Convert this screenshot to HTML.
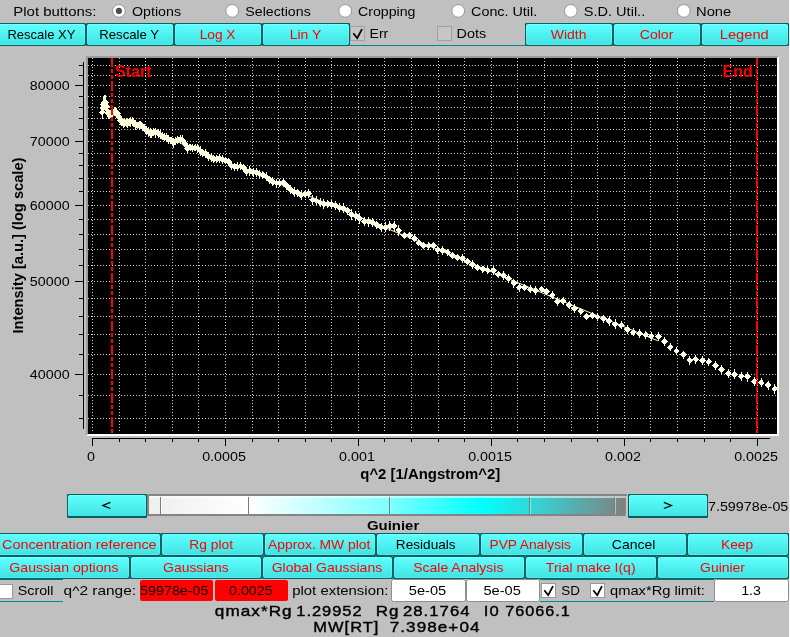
<!DOCTYPE html>
<html><head><meta charset="utf-8"><title>Guinier</title>
<style>
html,body{margin:0;padding:0;background:#c0c0c0;}
body{width:790px;height:637px;overflow:hidden;font-family:"Liberation Sans",sans-serif;}
svg{display:block;will-change:transform;}
text{font-family:"Liberation Sans",sans-serif;}
.t{font-size:13.3px;fill:#000;}
.r{fill:#ff0000;}
.tk{font-size:13.2px;fill:#000;}
.b{font-weight:bold;}
</style></head><body>
<svg width="790" height="637" viewBox="0 0 790 637">
<defs>
<linearGradient id="bg" x1="0" y1="0" x2="0" y2="1"><stop offset="0" stop-color="#60ffff"/><stop offset="1" stop-color="#3fe2e2"/></linearGradient>
<linearGradient id="wh" x1="0" y1="0" x2="1" y2="0"><stop offset="0" stop-color="#eeeeee"/><stop offset="0.21" stop-color="#ffffff"/><stop offset="0.50" stop-color="#80ffff"/><stop offset="0.70" stop-color="#00ffff"/><stop offset="0.80" stop-color="#30d8d8"/><stop offset="1" stop-color="#808080"/></linearGradient>
<clipPath id="cp"><rect x="88" y="58" width="689" height="376"/></clipPath>
<clipPath id="ci"><rect x="141" y="581" width="71" height="20"/></clipPath>
</defs>
<rect x="0" y="0" width="790" height="637" fill="#c0c0c0"/>

<text x="13.27" y="16.0" class="t" textLength="83.19" lengthAdjust="spacingAndGlyphs">Plot buttons:</text>
<circle cx="118.9" cy="10.9" r="6.35" fill="#ffffff" stroke="#8e8e8e" stroke-width="0.9"/>
<circle cx="118.9" cy="10.9" r="2.8" fill="#505050" stroke="#303030" stroke-width="0.6"/>
<text x="132.03" y="16.0" class="t" textLength="48.99" lengthAdjust="spacingAndGlyphs">Options</text>
<circle cx="232.2" cy="10.9" r="6.35" fill="#ffffff" stroke="#8e8e8e" stroke-width="0.9"/>
<text x="245.36" y="16.0" class="t" textLength="65.36" lengthAdjust="spacingAndGlyphs">Selections</text>
<circle cx="345.2" cy="10.9" r="6.35" fill="#ffffff" stroke="#8e8e8e" stroke-width="0.9"/>
<text x="357.98" y="16.0" class="t" textLength="57.43" lengthAdjust="spacingAndGlyphs">Cropping</text>
<circle cx="458.2" cy="10.9" r="6.35" fill="#ffffff" stroke="#8e8e8e" stroke-width="0.9"/>
<text x="471.07" y="16.0" class="t" textLength="66.14" lengthAdjust="spacingAndGlyphs">Conc. Util.</text>
<circle cx="570.8000000000001" cy="10.9" r="6.35" fill="#ffffff" stroke="#8e8e8e" stroke-width="0.9"/>
<text x="583.74" y="16.0" class="t" textLength="61.49" lengthAdjust="spacingAndGlyphs">S.D. Util..</text>
<circle cx="683.8000000000001" cy="10.9" r="6.35" fill="#ffffff" stroke="#8e8e8e" stroke-width="0.9"/>
<text x="695.99" y="16.0" class="t" textLength="35.27" lengthAdjust="spacingAndGlyphs">None</text>
<rect x="-3" y="23" width="89" height="23" rx="1.2" ry="1.2" fill="#006464"/>
<rect x="-2" y="24" width="87" height="21" rx="2" ry="2" fill="url(#bg)"/>
<rect x="-1.5" y="24.5" width="86" height="20" rx="1.5" ry="1.5" fill="none" stroke="#ffffff" stroke-opacity="0.16"/>
<text x="7.43" y="39.1" class="t" textLength="68.05" lengthAdjust="spacingAndGlyphs">Rescale XY</text>
<rect x="86" y="23" width="88" height="23" rx="1.2" ry="1.2" fill="#006464"/>
<rect x="87" y="24" width="86" height="21" rx="2" ry="2" fill="url(#bg)"/>
<rect x="87.5" y="24.5" width="85" height="20" rx="1.5" ry="1.5" fill="none" stroke="#ffffff" stroke-opacity="0.16"/>
<text x="99.22" y="39.1" class="t" textLength="59.87" lengthAdjust="spacingAndGlyphs">Rescale Y</text>
<rect x="174" y="23" width="88" height="23" rx="1.2" ry="1.2" fill="#006464"/>
<rect x="175" y="24" width="86" height="21" rx="2" ry="2" fill="url(#bg)"/>
<rect x="175.5" y="24.5" width="85" height="20" rx="1.5" ry="1.5" fill="none" stroke="#ffffff" stroke-opacity="0.16"/>
<text x="199.68" y="39.1" class="t r" textLength="35.81" lengthAdjust="spacingAndGlyphs">Log X</text>
<rect x="262" y="23" width="88" height="23" rx="1.2" ry="1.2" fill="#006464"/>
<rect x="263" y="24" width="86" height="21" rx="2" ry="2" fill="url(#bg)"/>
<rect x="263.5" y="24.5" width="85" height="20" rx="1.5" ry="1.5" fill="none" stroke="#ffffff" stroke-opacity="0.16"/>
<text x="289.66" y="39.1" class="t r" textLength="31.55" lengthAdjust="spacingAndGlyphs">Lin Y</text>
<rect x="525" y="23" width="88" height="23" rx="1.2" ry="1.2" fill="#006464"/>
<rect x="526" y="24" width="86" height="21" rx="2" ry="2" fill="url(#bg)"/>
<rect x="526.5" y="24.5" width="85" height="20" rx="1.5" ry="1.5" fill="none" stroke="#ffffff" stroke-opacity="0.16"/>
<text x="550.74" y="39.1" class="t r" textLength="35.67" lengthAdjust="spacingAndGlyphs">Width</text>
<rect x="613" y="23" width="88" height="23" rx="1.2" ry="1.2" fill="#006464"/>
<rect x="614" y="24" width="86" height="21" rx="2" ry="2" fill="url(#bg)"/>
<rect x="614.5" y="24.5" width="85" height="20" rx="1.5" ry="1.5" fill="none" stroke="#ffffff" stroke-opacity="0.16"/>
<text x="639.79" y="39.1" class="t r" textLength="33.55" lengthAdjust="spacingAndGlyphs">Color</text>
<rect x="701" y="23" width="88" height="23" rx="1.2" ry="1.2" fill="#006464"/>
<rect x="702" y="24" width="86" height="21" rx="2" ry="2" fill="url(#bg)"/>
<rect x="702.5" y="24.5" width="85" height="20" rx="1.5" ry="1.5" fill="none" stroke="#ffffff" stroke-opacity="0.16"/>
<text x="719.80" y="39.1" class="t r" textLength="48.95" lengthAdjust="spacingAndGlyphs">Legend</text>
<rect x="350" y="45" width="175" height="1" fill="#008b8b"/>
<rect x="350.5" y="26.5" width="14" height="14" fill="#c6c6c6" stroke="#a0a0a0" stroke-width="1"/>
<path d="M353.3 33.3 L357.2 38.2 L362 29.2" fill="none" stroke="#000" stroke-width="1.8" stroke-linecap="butt" stroke-linejoin="miter"/>
<text x="369.55" y="38.1" class="t" textLength="18.68" lengthAdjust="spacingAndGlyphs">Err</text>
<rect x="437.5" y="26.5" width="14" height="14" fill="#c6c6c6" stroke="#a0a0a0" stroke-width="1"/>
<text x="456.52" y="38.1" class="t" textLength="29.60" lengthAdjust="spacingAndGlyphs">Dots</text>
<rect x="86" y="56" width="693" height="380" fill="#ffffff"/>
<path d="M86 56 H779 L777 58 H88 V434 L86 436 Z" fill="#9c9c9c"/>
<rect x="88" y="58" width="689" height="376" fill="#000000"/>
<g clip-path="url(#cp)" stroke="#d0d0d0" stroke-width="1" stroke-dasharray="1 2" fill="none" shape-rendering="crispEdges">
<line x1="92.5" y1="58" x2="92.5" y2="432"/>
<line x1="119.5" y1="58" x2="119.5" y2="432"/>
<line x1="145.5" y1="58" x2="145.5" y2="432"/>
<line x1="172.5" y1="58" x2="172.5" y2="432"/>
<line x1="198.5" y1="58" x2="198.5" y2="432"/>
<line x1="225.5" y1="58" x2="225.5" y2="432"/>
<line x1="252.5" y1="58" x2="252.5" y2="432"/>
<line x1="278.5" y1="58" x2="278.5" y2="432"/>
<line x1="305.5" y1="58" x2="305.5" y2="432"/>
<line x1="331.5" y1="58" x2="331.5" y2="432"/>
<line x1="358.5" y1="58" x2="358.5" y2="432"/>
<line x1="384.5" y1="58" x2="384.5" y2="432"/>
<line x1="411.5" y1="58" x2="411.5" y2="432"/>
<line x1="438.5" y1="58" x2="438.5" y2="432"/>
<line x1="464.5" y1="58" x2="464.5" y2="432"/>
<line x1="491.5" y1="58" x2="491.5" y2="432"/>
<line x1="517.5" y1="58" x2="517.5" y2="432"/>
<line x1="544.5" y1="58" x2="544.5" y2="432"/>
<line x1="571.5" y1="58" x2="571.5" y2="432"/>
<line x1="597.5" y1="58" x2="597.5" y2="432"/>
<line x1="624.5" y1="58" x2="624.5" y2="432"/>
<line x1="650.5" y1="58" x2="650.5" y2="432"/>
<line x1="677.5" y1="58" x2="677.5" y2="432"/>
<line x1="704.5" y1="58" x2="704.5" y2="432"/>
<line x1="730.5" y1="58" x2="730.5" y2="432"/>
<line x1="757.5" y1="58" x2="757.5" y2="432"/>
<line x1="88" y1="418.5" x2="777" y2="418.5"/>
<line x1="88" y1="395.5" x2="777" y2="395.5"/>
<line x1="88" y1="374.5" x2="777" y2="374.5"/>
<line x1="88" y1="354.5" x2="777" y2="354.5"/>
<line x1="88" y1="334.5" x2="777" y2="334.5"/>
<line x1="88" y1="316.5" x2="777" y2="316.5"/>
<line x1="88" y1="298.5" x2="777" y2="298.5"/>
<line x1="88" y1="281.5" x2="777" y2="281.5"/>
<line x1="88" y1="265.5" x2="777" y2="265.5"/>
<line x1="88" y1="249.5" x2="777" y2="249.5"/>
<line x1="88" y1="234.5" x2="777" y2="234.5"/>
<line x1="88" y1="219.5" x2="777" y2="219.5"/>
<line x1="88" y1="205.5" x2="777" y2="205.5"/>
<line x1="88" y1="191.5" x2="777" y2="191.5"/>
<line x1="88" y1="178.5" x2="777" y2="178.5"/>
<line x1="88" y1="165.5" x2="777" y2="165.5"/>
<line x1="88" y1="153.5" x2="777" y2="153.5"/>
<line x1="88" y1="141.5" x2="777" y2="141.5"/>
<line x1="88" y1="129.5" x2="777" y2="129.5"/>
<line x1="88" y1="118.5" x2="777" y2="118.5"/>
<line x1="88" y1="107.5" x2="777" y2="107.5"/>
<line x1="88" y1="96.5" x2="777" y2="96.5"/>
<line x1="88" y1="85.5" x2="777" y2="85.5"/>
<line x1="88" y1="75.5" x2="777" y2="75.5"/>
<line x1="88" y1="65.5" x2="777" y2="65.5"/>
</g>
<g stroke="#000" stroke-width="1" shape-rendering="crispEdges">
<line x1="83.5" y1="62" x2="83.5" y2="429"/>
<line x1="79" y1="418.5" x2="84" y2="418.5"/>
<line x1="79" y1="395.5" x2="84" y2="395.5"/>
<line x1="75" y1="374.5" x2="84" y2="374.5"/>
<line x1="79" y1="354.5" x2="84" y2="354.5"/>
<line x1="79" y1="334.5" x2="84" y2="334.5"/>
<line x1="79" y1="316.5" x2="84" y2="316.5"/>
<line x1="79" y1="298.5" x2="84" y2="298.5"/>
<line x1="75" y1="281.5" x2="84" y2="281.5"/>
<line x1="79" y1="265.5" x2="84" y2="265.5"/>
<line x1="79" y1="249.5" x2="84" y2="249.5"/>
<line x1="79" y1="234.5" x2="84" y2="234.5"/>
<line x1="79" y1="219.5" x2="84" y2="219.5"/>
<line x1="75" y1="205.5" x2="84" y2="205.5"/>
<line x1="79" y1="191.5" x2="84" y2="191.5"/>
<line x1="79" y1="178.5" x2="84" y2="178.5"/>
<line x1="79" y1="165.5" x2="84" y2="165.5"/>
<line x1="79" y1="153.5" x2="84" y2="153.5"/>
<line x1="75" y1="141.5" x2="84" y2="141.5"/>
<line x1="79" y1="129.5" x2="84" y2="129.5"/>
<line x1="79" y1="118.5" x2="84" y2="118.5"/>
<line x1="79" y1="107.5" x2="84" y2="107.5"/>
<line x1="79" y1="96.5" x2="84" y2="96.5"/>
<line x1="75" y1="85.5" x2="84" y2="85.5"/>
<line x1="79" y1="75.5" x2="84" y2="75.5"/>
<line x1="79" y1="65.5" x2="84" y2="65.5"/>
<line x1="92" y1="438.5" x2="770" y2="438.5"/>
<line x1="92.5" y1="438" x2="92.5" y2="446"/>
<line x1="119.5" y1="438" x2="119.5" y2="442"/>
<line x1="145.5" y1="438" x2="145.5" y2="442"/>
<line x1="172.5" y1="438" x2="172.5" y2="442"/>
<line x1="198.5" y1="438" x2="198.5" y2="442"/>
<line x1="225.5" y1="438" x2="225.5" y2="446"/>
<line x1="252.5" y1="438" x2="252.5" y2="442"/>
<line x1="278.5" y1="438" x2="278.5" y2="442"/>
<line x1="305.5" y1="438" x2="305.5" y2="442"/>
<line x1="331.5" y1="438" x2="331.5" y2="442"/>
<line x1="358.5" y1="438" x2="358.5" y2="446"/>
<line x1="384.5" y1="438" x2="384.5" y2="442"/>
<line x1="411.5" y1="438" x2="411.5" y2="442"/>
<line x1="438.5" y1="438" x2="438.5" y2="442"/>
<line x1="464.5" y1="438" x2="464.5" y2="442"/>
<line x1="491.5" y1="438" x2="491.5" y2="446"/>
<line x1="517.5" y1="438" x2="517.5" y2="442"/>
<line x1="544.5" y1="438" x2="544.5" y2="442"/>
<line x1="571.5" y1="438" x2="571.5" y2="442"/>
<line x1="597.5" y1="438" x2="597.5" y2="442"/>
<line x1="624.5" y1="438" x2="624.5" y2="446"/>
<line x1="650.5" y1="438" x2="650.5" y2="442"/>
<line x1="677.5" y1="438" x2="677.5" y2="442"/>
<line x1="704.5" y1="438" x2="704.5" y2="442"/>
<line x1="730.5" y1="438" x2="730.5" y2="442"/>
<line x1="757.5" y1="438" x2="757.5" y2="446"/>
</g>
<text x="69.6" y="89.9" class="tk" text-anchor="end" textLength="39.8" lengthAdjust="spacingAndGlyphs">80000</text>
<text x="69.6" y="145.9" class="tk" text-anchor="end" textLength="39.8" lengthAdjust="spacingAndGlyphs">70000</text>
<text x="69.6" y="209.9" class="tk" text-anchor="end" textLength="39.8" lengthAdjust="spacingAndGlyphs">60000</text>
<text x="69.6" y="285.9" class="tk" text-anchor="end" textLength="39.8" lengthAdjust="spacingAndGlyphs">50000</text>
<text x="69.6" y="378.9" class="tk" text-anchor="end" textLength="39.8" lengthAdjust="spacingAndGlyphs">40000</text>
<text x="91.0" y="460.7" class="tk" text-anchor="middle" textLength="8.0" lengthAdjust="spacingAndGlyphs">0</text>
<text x="224.0" y="460.7" class="tk" text-anchor="middle" textLength="43.7" lengthAdjust="spacingAndGlyphs">0.0005</text>
<text x="357.0" y="460.7" class="tk" text-anchor="middle" textLength="35.8" lengthAdjust="spacingAndGlyphs">0.001</text>
<text x="490.0" y="460.7" class="tk" text-anchor="middle" textLength="43.7" lengthAdjust="spacingAndGlyphs">0.0015</text>
<text x="623.0" y="460.7" class="tk" text-anchor="middle" textLength="35.8" lengthAdjust="spacingAndGlyphs">0.002</text>
<text x="756.0" y="460.7" class="tk" text-anchor="middle" textLength="43.7" lengthAdjust="spacingAndGlyphs">0.0025</text>
<text x="430.3" y="479.3" text-anchor="middle" style="font-size:14.92px;font-weight:bold;fill:#000">q^2 [1/Angstrom^2]</text>
<text transform="translate(23.3 245.5) rotate(-90)" text-anchor="middle" style="font-size:14.67px;font-weight:bold;fill:#000">Intensity [a.u.] (log scale)</text>
<g clip-path="url(#cp)">
<line x1="112.2" y1="114.4" x2="657.8" y2="340.8" stroke="#ffffe0" stroke-width="1"/>
<path d="M98.8 112.3L102.1 108.9L105.4 112.3L102.1 115.6ZM99.6 108.4L102.9 105.0L106.3 108.4L102.9 111.7ZM100.4 104.6L103.8 101.2L107.1 104.6L103.8 107.9ZM101.3 102.4L104.7 99.1L108.0 102.4L104.7 105.8ZM102.2 102.9L105.6 99.5L108.9 102.9L105.6 106.2ZM103.2 106.6L106.5 103.3L109.9 106.6L106.5 110.0ZM104.2 113.2L107.5 109.8L110.9 113.2L107.5 116.5ZM105.2 113.8L108.5 110.5L111.9 113.8L108.5 117.2ZM106.2 114.4L109.6 111.0L112.9 114.4L109.6 117.7ZM107.3 114.2L110.7 110.8L114.0 114.2L110.7 117.5ZM108.4 113.2L111.8 109.8L115.1 113.2L111.8 116.5ZM109.6 112.7L112.9 109.4L116.3 112.7L112.9 116.1ZM110.7 111.7L114.1 108.3L117.4 111.7L114.1 115.0ZM112.0 111.4L115.3 108.1L118.7 111.4L115.3 114.8ZM113.2 112.0L116.5 108.6L119.9 112.0L116.5 115.3ZM114.5 113.3L117.8 109.9L121.2 113.3L117.8 116.6ZM115.8 117.1L119.1 113.7L122.5 117.1L119.1 120.4ZM117.1 120.8L120.5 117.5L123.8 120.8L120.5 124.2ZM118.5 121.9L121.8 118.6L125.2 121.9L121.8 125.3ZM119.9 123.3L123.2 120.0L126.6 123.3L123.2 126.7ZM121.3 123.1L124.7 119.8L128.0 123.1L124.7 126.5ZM122.8 122.4L126.1 119.1L129.5 122.4L126.1 125.8ZM124.3 123.4L127.6 120.0L131.0 123.4L127.6 126.7ZM125.8 122.0L129.2 118.7L132.5 122.0L129.2 125.4ZM127.4 121.8L130.7 118.5L134.1 121.8L130.7 125.2ZM129.0 121.4L132.3 118.1L135.7 121.4L132.3 124.8ZM130.6 122.4L133.9 119.1L137.3 122.4L133.9 125.8ZM132.3 124.9L135.6 121.6L139.0 124.9L135.6 128.3ZM133.9 125.4L137.3 122.1L140.6 125.4L137.3 128.8ZM135.7 125.1L139.0 121.7L142.4 125.1L139.0 128.4ZM137.4 124.9L140.8 121.6L144.1 124.9L140.8 128.3ZM139.2 126.5L142.6 123.1L145.9 126.5L142.6 129.8ZM141.0 127.9L144.4 124.5L147.7 127.9L144.4 131.2ZM142.9 130.2L146.2 126.9L149.6 130.2L146.2 133.6ZM144.8 131.7L148.1 128.4L151.5 131.7L148.1 135.1ZM146.7 133.0L150.0 129.7L153.4 133.0L150.0 136.4ZM148.6 133.3L152.0 130.0L155.3 133.3L152.0 136.7ZM150.6 132.1L154.0 128.7L157.3 132.1L154.0 135.4ZM152.6 132.6L156.0 129.2L159.3 132.6L156.0 135.9ZM154.7 133.2L158.0 129.9L161.4 133.2L158.0 136.6ZM156.7 134.5L160.1 131.1L163.4 134.5L160.1 137.8ZM158.9 136.2L162.2 132.8L165.6 136.2L162.2 139.5ZM161.0 137.2L164.3 133.8L167.7 137.2L164.3 140.5ZM163.2 137.6L166.5 134.2L169.9 137.6L166.5 140.9ZM165.4 139.7L168.7 136.3L172.1 139.7L168.7 143.0ZM167.6 140.3L171.0 137.0L174.3 140.3L171.0 143.7ZM169.9 142.7L173.2 139.3L176.6 142.7L173.2 146.0ZM172.2 141.0L175.5 137.7L178.9 141.0L175.5 144.4ZM174.5 140.1L177.9 136.8L181.2 140.1L177.9 143.5ZM176.9 139.4L180.2 136.1L183.6 139.4L180.2 142.8ZM179.3 140.1L182.6 136.8L186.0 140.1L182.6 143.5ZM181.7 144.1L185.1 140.8L188.4 144.1L185.1 147.5ZM184.2 148.5L187.5 145.2L190.9 148.5L187.5 151.9ZM186.7 147.3L190.0 143.9L193.4 147.3L190.0 150.6ZM189.2 148.1L192.6 144.7L195.9 148.1L192.6 151.4ZM191.8 147.9L195.1 144.5L198.5 147.9L195.1 151.2ZM194.4 148.2L197.7 144.8L201.1 148.2L197.7 151.5ZM197.0 150.8L200.3 147.4L203.7 150.8L200.3 154.1ZM199.6 152.7L203.0 149.4L206.3 152.7L203.0 156.1ZM202.3 153.8L205.7 150.5L209.0 153.8L205.7 157.2ZM205.1 156.3L208.4 152.9L211.8 156.3L208.4 159.6ZM207.8 157.6L211.2 154.2L214.5 157.6L211.2 160.9ZM210.6 159.1L213.9 155.7L217.3 159.1L213.9 162.4ZM213.4 159.0L216.8 155.6L220.1 159.0L216.8 162.3ZM216.3 158.5L219.6 155.2L223.0 158.5L219.6 161.9ZM219.1 159.7L222.5 156.3L225.8 159.7L222.5 163.0ZM222.1 160.4L225.4 157.1L228.8 160.4L225.4 163.8ZM225.0 161.6L228.4 158.3L231.7 161.6L228.4 165.0ZM228.0 165.8L231.3 162.4L234.7 165.8L231.3 169.1ZM231.0 166.6L234.3 163.3L237.7 166.6L234.3 170.0ZM234.0 166.8L237.4 163.5L240.7 166.8L237.4 170.2ZM237.1 166.0L240.5 162.6L243.8 166.0L240.5 169.3ZM240.2 167.7L243.6 164.4L246.9 167.7L243.6 171.1ZM243.4 171.5L246.7 168.2L250.1 171.5L246.7 174.9ZM246.5 170.9L249.9 167.6L253.2 170.9L249.9 174.3ZM249.7 172.4L253.1 169.0L256.4 172.4L253.1 175.7ZM253.0 172.4L256.3 169.0L259.7 172.4L256.3 175.7ZM256.2 174.1L259.6 170.7L262.9 174.1L259.6 177.4ZM259.5 174.9L262.9 171.5L266.2 174.9L262.9 178.2ZM262.9 176.7L266.2 173.3L269.6 176.7L266.2 180.0ZM266.2 179.7L269.6 176.4L272.9 179.7L269.6 183.1ZM269.6 181.9L273.0 178.6L276.3 181.9L273.0 185.3ZM273.1 183.0L276.4 179.6L279.8 183.0L276.4 186.3ZM276.5 183.3L279.9 179.9L283.2 183.3L279.9 186.6ZM280.0 182.7L283.4 179.3L286.7 182.7L283.4 186.0ZM283.5 186.0L286.9 182.7L290.2 186.0L286.9 189.4ZM287.1 189.5L290.5 186.1L293.8 189.5L290.5 192.8ZM290.7 192.1L294.0 188.8L297.4 192.1L294.0 195.5ZM294.3 192.6L297.7 189.2L301.0 192.6L297.7 195.9ZM298.0 195.3L301.3 191.9L304.7 195.3L301.3 198.6ZM301.7 193.8L305.0 190.5L308.4 193.8L305.0 197.2ZM305.4 193.3L308.7 189.9L312.1 193.3L308.7 196.6ZM309.1 199.9L312.5 196.6L315.8 199.9L312.5 203.3ZM312.9 200.9L316.3 197.6L319.6 200.9L316.3 204.3ZM316.7 202.7L320.1 199.4L323.4 202.7L320.1 206.1ZM320.6 204.3L323.9 200.9L327.3 204.3L323.9 207.6ZM324.4 203.9L327.8 200.6L331.1 203.9L327.8 207.3ZM328.4 204.6L331.7 201.3L335.1 204.6L331.7 208.0ZM332.3 205.5L335.7 202.1L339.0 205.5L335.7 208.8ZM336.3 207.5L339.6 204.1L343.0 207.5L339.6 210.8ZM340.3 208.3L343.6 205.0L347.0 208.3L343.6 211.7ZM344.3 211.0L347.7 207.6L351.0 211.0L347.7 214.3ZM348.4 214.5L351.8 211.1L355.1 214.5L351.8 217.8ZM352.5 216.0L355.9 212.6L359.2 216.0L355.9 219.3ZM356.6 218.7L360.0 215.3L363.3 218.7L360.0 222.0ZM360.8 221.5L364.2 218.2L367.5 221.5L364.2 224.9ZM365.0 221.6L368.4 218.2L371.7 221.6L368.4 224.9ZM369.2 222.6L372.6 219.3L375.9 222.6L372.6 226.0ZM373.5 225.1L376.9 221.8L380.2 225.1L376.9 228.5ZM377.8 227.1L381.2 223.8L384.5 227.1L381.2 230.5ZM382.1 227.2L385.5 223.9L388.8 227.2L385.5 230.6ZM386.5 225.9L389.9 222.5L393.2 225.9L389.9 229.2ZM390.9 226.0L394.3 222.6L397.6 226.0L394.3 229.3ZM395.3 230.3L398.7 227.0L402.0 230.3L398.7 233.7ZM401.2 235.4L404.6 232.1L408.0 235.4L404.6 238.8ZM406.5 235.4L409.9 232.1L413.2 235.4L409.9 238.8ZM411.0 238.4L414.4 235.1L417.8 238.4L414.4 241.8ZM415.6 242.7L419.0 239.3L422.4 242.7L419.0 246.0ZM420.1 245.7L423.5 242.3L426.9 245.7L423.5 249.0ZM425.5 245.7L428.9 242.3L432.2 245.7L428.9 249.0ZM430.3 245.7L433.7 242.3L437.1 245.7L433.7 249.0ZM434.3 249.8L437.7 246.5L441.1 249.8L437.7 253.2ZM439.4 250.6L442.8 247.2L446.2 250.6L442.8 253.9ZM444.5 252.4L447.9 249.1L451.2 252.4L447.9 255.8ZM449.0 255.4L452.4 252.1L455.8 255.4L452.4 258.8ZM454.0 257.4L457.4 254.0L460.8 257.4L457.4 260.8ZM459.2 258.5L462.6 255.2L466.0 258.5L462.6 261.9ZM464.2 261.5L467.6 258.1L471.0 261.5L467.6 264.9ZM469.2 264.5L472.6 261.1L476.0 264.5L472.6 267.9ZM474.1 267.3L477.5 263.9L480.9 267.3L477.5 270.7ZM479.4 269.1L482.8 265.8L486.2 269.1L482.8 272.5ZM484.4 270.3L487.8 266.9L491.2 270.3L487.8 273.7ZM490.0 270.3L493.4 266.9L496.8 270.3L493.4 273.7ZM495.0 274.1L498.4 270.8L501.8 274.1L498.4 277.5ZM500.2 275.6L503.6 272.2L507.0 275.6L503.6 279.0ZM505.2 278.7L508.6 275.3L512.0 278.7L508.6 282.1ZM510.5 283.2L513.9 279.8L517.2 283.2L513.9 286.6ZM515.9 287.2L519.3 283.8L522.6 287.2L519.3 290.6ZM521.0 287.7L524.4 284.3L527.8 287.7L524.4 291.1ZM526.9 289.2L530.2 285.8L533.6 289.2L530.2 292.6ZM532.1 290.2L535.5 286.8L538.9 290.2L535.5 293.6ZM538.2 289.2L541.6 285.8L545.0 289.2L541.6 292.6ZM543.2 291.5L546.6 288.1L550.0 291.5L546.6 294.9ZM548.9 295.3L552.2 291.9L555.6 295.3L552.2 298.7ZM554.1 301.3L557.5 297.9L560.9 301.3L557.5 304.7ZM559.9 301.0L563.3 297.6L566.6 301.0L563.3 304.4ZM565.9 305.1L569.2 301.8L572.6 305.1L569.2 308.5ZM571.1 308.2L574.5 304.8L577.9 308.2L574.5 311.6ZM577.2 311.2L580.6 307.8L584.0 311.2L580.6 314.6ZM583.0 316.5L586.4 313.1L589.8 316.5L586.4 319.9ZM589.1 315.5L592.5 312.1L595.9 315.5L592.5 318.9ZM594.1 317.0L597.5 313.6L600.9 317.0L597.5 320.4ZM600.0 318.8L603.4 315.4L606.8 318.8L603.4 322.2ZM605.9 321.1L609.2 317.8L612.6 321.1L609.2 324.5ZM611.9 324.1L615.3 320.8L618.6 324.1L615.3 327.5ZM617.9 325.2L621.3 321.8L624.6 325.2L621.3 328.6ZM624.0 329.7L627.4 326.3L630.8 329.7L627.4 333.1ZM630.0 332.2L633.4 328.8L636.8 332.2L633.4 335.6ZM636.1 333.5L639.5 330.1L642.9 333.5L639.5 336.9ZM642.2 335.0L645.6 331.6L649.0 335.0L645.6 338.4ZM647.9 336.3L651.3 332.9L654.6 336.3L651.3 339.7ZM655.1 336.3L658.5 332.9L661.9 336.3L658.5 339.7ZM661.2 341.5L664.6 338.1L668.0 341.5L664.6 344.9ZM667.0 347.2L670.4 343.8L673.8 347.2L670.4 350.6ZM673.1 351.1L676.5 347.8L679.9 351.1L676.5 354.5ZM680.1 354.7L683.5 351.3L686.9 354.7L683.5 358.1ZM686.4 360.4L689.8 357.0L693.1 360.4L689.8 363.8ZM692.5 359.5L695.9 356.1L699.2 359.5L695.9 362.9ZM699.1 360.4L702.5 357.0L705.9 360.4L702.5 363.8ZM705.2 362.0L708.6 358.6L712.0 362.0L708.6 365.4ZM712.0 365.4L715.4 362.0L718.8 365.4L715.4 368.8ZM718.1 369.2L721.5 365.8L724.9 369.2L721.5 372.6ZM724.9 373.4L728.3 370.0L731.6 373.4L728.3 376.8ZM731.0 374.3L734.4 370.9L737.8 374.3L734.4 377.7ZM737.9 376.2L741.3 372.8L744.6 376.2L741.3 379.6ZM744.4 376.6L747.7 373.2L751.1 376.6L747.7 380.0ZM751.0 381.5L754.4 378.1L757.8 381.5L754.4 384.9ZM758.0 382.8L761.4 379.4L764.8 382.8L761.4 386.2ZM764.9 385.1L768.2 381.8L771.6 385.1L768.2 388.5ZM771.4 388.9L774.7 385.5L778.1 388.9L774.7 392.2Z" fill="#fffff0" shape-rendering="crispEdges"/>
<path d="M102.5 105.7V118.8M102.5 101.5V115.2M103.5 97.1V112.0M104.5 94.7V110.1M105.5 95.2V110.6M106.5 102.3V111.0M107.5 109.0V117.4M108.5 108.9V118.8M109.5 110.0V118.7M110.5 109.9V118.4M111.5 108.2V118.1M112.5 108.3V117.1M114.5 107.0V116.3M115.5 107.2V115.6M116.5 107.7V116.3M117.5 109.5V117.0M119.5 112.9V121.2M120.5 116.5V125.1M121.5 118.1V125.8M123.5 118.8V127.9M124.5 119.1V127.1M126.5 118.4V126.5M127.5 119.3V127.5M129.5 117.6V126.4M130.5 117.1V126.5M132.5 117.0V125.9M133.5 118.0V126.8M135.5 120.0V129.9M137.5 122.0V128.9M139.5 120.7V129.5M140.5 120.7V129.2M142.5 122.5V130.5M144.5 123.9V131.8M146.5 125.9V134.6M148.5 127.0V136.5M150.5 128.1V138.0M151.5 128.5V138.1M153.5 127.8V136.3M155.5 127.5V137.6M158.5 128.7V137.7M160.5 130.2V138.8M162.5 132.1V140.3M164.5 133.0V141.4M166.5 133.3V141.9M168.5 135.3V144.1M170.5 136.6V144.1M173.5 137.8V147.5M175.5 137.1V145.0M177.5 136.1V144.2M180.5 134.9V143.9M182.5 135.4V144.9M185.5 139.6V148.7M187.5 144.5V152.5M190.5 143.7V150.8M192.5 143.7V152.4M195.5 144.3V151.4M197.5 143.7V152.6M200.5 145.7V155.9M202.5 148.6V156.9M205.5 149.4V158.3M208.5 151.8V160.7M211.5 152.7V162.4M213.5 154.8V163.4M216.5 154.7V163.2M219.5 153.9V163.2M222.5 155.3V164.1M225.5 156.6V164.3M228.5 157.7V165.6M231.5 161.2V170.4M234.5 162.5V170.8M237.5 162.3V171.3M240.5 161.5V170.4M243.5 163.6V171.8M246.5 167.3V175.7M249.5 166.4V175.5M253.5 167.9V176.9M256.5 168.3V176.5M259.5 170.0V178.2M262.5 170.6V179.2M266.5 172.1V181.3M269.5 175.6V183.8M272.5 177.4V186.4M276.5 178.5V187.5M279.5 179.4V187.2M283.5 178.1V187.3M286.5 182.1V190.0M290.5 184.8V194.2M294.5 187.3V196.9M297.5 188.5V196.6M301.5 190.3V200.3M305.5 189.6V198.0M308.5 189.1V197.5M312.5 195.4V204.5M316.5 196.4V205.4M320.5 198.1V207.4M323.5 199.3V209.2M327.5 199.9V208.0M331.5 199.9V209.3M335.5 201.3V209.7M339.5 203.0V211.9M343.5 203.4V213.2M347.5 207.2V214.8M351.5 209.1V219.9M355.5 211.0V220.9M359.5 213.2V224.1M364.5 216.9V226.2M368.5 216.5V226.7M372.5 218.2V227.1M376.5 220.9V229.3M381.5 222.8V231.5M385.5 222.4V232.0M389.5 221.2V230.5M394.5 220.7V231.3M398.5 224.9V235.8M404.5 231.6V239.2M409.5 232.2V238.6M414.5 234.4V242.4M418.5 239.3V246.1M423.5 242.1V249.3M428.5 241.8V249.6M433.5 241.9V249.5M437.5 246.1V253.5M442.5 246.3V254.9M447.5 248.5V256.3M452.5 251.7V259.1M457.5 253.8V261.0M462.5 254.3V262.7M467.5 257.6V265.4M472.5 260.3V268.7M477.5 263.5V271.1M482.5 265.5V272.7M487.5 266.3V274.3M493.5 266.0V274.6M498.5 270.5V277.7M503.5 271.3V279.9M508.5 274.3V283.1M513.5 278.9V287.5M519.5 282.8V291.6M524.5 284.1V291.3M530.5 285.0V293.4M535.5 285.8V294.6M541.5 285.6V292.8M546.5 287.6V295.4M552.5 291.4V299.2M557.5 297.1V305.5M563.5 296.9V305.1M569.5 301.0V309.2M574.5 303.7V312.7M580.5 307.5V314.9M586.5 312.7V320.3M592.5 311.6V319.4M597.5 313.1V320.9M603.5 315.0V322.6M609.5 316.3V325.9M615.5 319.4V328.8M621.5 321.3V329.1M627.5 325.4V334.0M633.5 328.0V336.4M639.5 329.3V337.7M645.5 330.8V339.2M651.5 331.7V340.9M658.5 331.8V340.8M664.5 337.2V345.8M670.5 343.1V351.3M676.5 346.8V355.4M683.5 350.6V358.8M689.5 355.8V365.0M695.5 354.8V364.2M702.5 356.0V364.8M708.5 357.9V366.1M715.5 361.1V369.7M721.5 364.7V373.7M728.5 368.7V378.1M734.5 369.4V379.2M741.5 371.7V380.7M747.5 371.6V381.6M754.5 376.7V386.3M761.5 378.2V387.4M768.5 380.5V389.7M774.5 384.2V393.6" fill="none" stroke="#ffffd0" stroke-width="1" shape-rendering="crispEdges"/>
</g>
<g clip-path="url(#cp)">
<line x1="112" y1="57" x2="112" y2="434" stroke="#ff0000" stroke-width="2" stroke-dasharray="10 2 4 2 4 2" shape-rendering="crispEdges"/>
<line x1="757" y1="57" x2="757" y2="434" stroke="#ff0000" stroke-width="2" stroke-dasharray="10 2 4 2 4 2" shape-rendering="crispEdges"/>
</g>
<text x="115" y="77" style="font-size:16px;font-weight:bold;fill:#ff0000">Start</text>
<text x="722.6" y="77" style="font-size:16px;font-weight:bold;fill:#ff0000">End</text>
<rect x="67" y="494" width="80" height="24" rx="1.2" ry="1.2" fill="#006464"/>
<rect x="68" y="495" width="78" height="22" rx="2" ry="2" fill="url(#bg)"/>
<rect x="68.5" y="495.5" width="77" height="21" rx="1.5" ry="1.5" fill="none" stroke="#ffffff" stroke-opacity="0.16"/>
<path d="M110.4 502.4 L102.8 505.5 L110.4 508.5" fill="none" stroke="#000" stroke-width="1.25" stroke-linejoin="miter"/>
<rect x="68" y="516" width="78" height="1" fill="#005a5a"/>
<rect x="628" y="494" width="80" height="24" rx="1.2" ry="1.2" fill="#006464"/>
<rect x="629" y="495" width="78" height="22" rx="2" ry="2" fill="url(#bg)"/>
<rect x="629.5" y="495.5" width="77" height="21" rx="1.5" ry="1.5" fill="none" stroke="#ffffff" stroke-opacity="0.16"/>
<path d="M663.8 502.4 L671.4 505.5 L663.8 508.5" fill="none" stroke="#000" stroke-width="1.25" stroke-linejoin="miter"/>
<rect x="629" y="516" width="78" height="1" fill="#005a5a"/>
<rect x="147" y="494" width="480" height="22" fill="#848484"/>
<rect x="625.7" y="496" width="1.3" height="20" fill="#cacaca"/>
<rect x="149" y="496" width="476.7" height="18" fill="url(#wh)"/>
<rect x="149" y="496" width="476.7" height="2" fill="#ffffff" fill-opacity="0.55"/>
<rect x="160" y="497" width="1" height="17" fill="#7c7c7c"/><rect x="161" y="497" width="1" height="17" fill="#ffffff" fill-opacity="0.45"/>
<rect x="248" y="497" width="1" height="17" fill="#7c7c7c"/><rect x="249" y="497" width="1" height="17" fill="#ffffff" fill-opacity="0.45"/>
<rect x="389" y="497" width="1" height="17" fill="#7c7c7c"/><rect x="390" y="497" width="1" height="17" fill="#ffffff" fill-opacity="0.45"/>
<rect x="529" y="497" width="1" height="17" fill="#7c7c7c"/><rect x="530" y="497" width="1" height="17" fill="#ffffff" fill-opacity="0.45"/>
<rect x="614" y="497" width="1" height="17" fill="#7c7c7c"/><rect x="615" y="497" width="1" height="17" fill="#ffffff" fill-opacity="0.45"/>
<text x="707.97" y="510.5" class="t" textLength="80.33" lengthAdjust="spacingAndGlyphs">7.59978e-05</text>
<text x="366.99" y="530.0" class="t b" textLength="52.24" lengthAdjust="spacingAndGlyphs" style="font-size:12.7px">Guinier</text>
<rect x="-3" y="533" width="164" height="23" rx="1.2" ry="1.2" fill="#006464"/>
<rect x="-2" y="534" width="162" height="21" rx="2" ry="2" fill="url(#bg)"/>
<rect x="-1.5" y="534.5" width="161" height="20" rx="1.5" ry="1.5" fill="none" stroke="#ffffff" stroke-opacity="0.16"/>
<text x="1.97" y="549.1" class="t r" textLength="154.67" lengthAdjust="spacingAndGlyphs">Concentration reference</text>
<rect x="161" y="533" width="103" height="23" rx="1.2" ry="1.2" fill="#006464"/>
<rect x="162" y="534" width="101" height="21" rx="2" ry="2" fill="url(#bg)"/>
<rect x="162.5" y="534.5" width="100" height="20" rx="1.5" ry="1.5" fill="none" stroke="#ffffff" stroke-opacity="0.16"/>
<text x="189.37" y="549.1" class="t r" textLength="43.73" lengthAdjust="spacingAndGlyphs">Rg plot</text>
<rect x="264" y="533" width="112" height="23" rx="1.2" ry="1.2" fill="#006464"/>
<rect x="265" y="534" width="110" height="21" rx="2" ry="2" fill="url(#bg)"/>
<rect x="265.5" y="534.5" width="109" height="20" rx="1.5" ry="1.5" fill="none" stroke="#ffffff" stroke-opacity="0.16"/>
<text x="267.97" y="549.1" class="t r" textLength="102.43" lengthAdjust="spacingAndGlyphs">Approx. MW plot</text>
<rect x="376" y="533" width="104" height="23" rx="1.2" ry="1.2" fill="#006464"/>
<rect x="377" y="534" width="102" height="21" rx="2" ry="2" fill="url(#bg)"/>
<rect x="377.5" y="534.5" width="101" height="20" rx="1.5" ry="1.5" fill="none" stroke="#ffffff" stroke-opacity="0.16"/>
<text x="395.88" y="549.1" class="t" textLength="59.81" lengthAdjust="spacingAndGlyphs">Residuals</text>
<rect x="480" y="533" width="103" height="23" rx="1.2" ry="1.2" fill="#006464"/>
<rect x="481" y="534" width="101" height="21" rx="2" ry="2" fill="url(#bg)"/>
<rect x="481.5" y="534.5" width="100" height="20" rx="1.5" ry="1.5" fill="none" stroke="#ffffff" stroke-opacity="0.16"/>
<text x="489.47" y="549.1" class="t r" textLength="81.52" lengthAdjust="spacingAndGlyphs">PVP Analysis</text>
<rect x="583" y="533" width="104" height="23" rx="1.2" ry="1.2" fill="#006464"/>
<rect x="584" y="534" width="102" height="21" rx="2" ry="2" fill="url(#bg)"/>
<rect x="584.5" y="534.5" width="101" height="20" rx="1.5" ry="1.5" fill="none" stroke="#ffffff" stroke-opacity="0.16"/>
<text x="611.89" y="549.1" class="t" textLength="43.44" lengthAdjust="spacingAndGlyphs">Cancel</text>
<rect x="687" y="533" width="102" height="23" rx="1.2" ry="1.2" fill="#006464"/>
<rect x="688" y="534" width="100" height="21" rx="2" ry="2" fill="url(#bg)"/>
<rect x="688.5" y="534.5" width="99" height="20" rx="1.5" ry="1.5" fill="none" stroke="#ffffff" stroke-opacity="0.16"/>
<text x="721.07" y="549.1" class="t r" textLength="32.10" lengthAdjust="spacingAndGlyphs">Keep</text>
<rect x="-3" y="556" width="133" height="23" rx="1.2" ry="1.2" fill="#006464"/>
<rect x="-2" y="557" width="131" height="21" rx="2" ry="2" fill="url(#bg)"/>
<rect x="-1.5" y="557.5" width="130" height="20" rx="1.5" ry="1.5" fill="none" stroke="#ffffff" stroke-opacity="0.16"/>
<text x="9.29" y="572.1" class="t r" textLength="109.22" lengthAdjust="spacingAndGlyphs">Gaussian options</text>
<rect x="130" y="556" width="132" height="23" rx="1.2" ry="1.2" fill="#006464"/>
<rect x="131" y="557" width="130" height="21" rx="2" ry="2" fill="url(#bg)"/>
<rect x="131.5" y="557.5" width="129" height="20" rx="1.5" ry="1.5" fill="none" stroke="#ffffff" stroke-opacity="0.16"/>
<text x="163.10" y="572.1" class="t r" textLength="65.70" lengthAdjust="spacingAndGlyphs">Gaussians</text>
<rect x="262" y="556" width="131" height="23" rx="1.2" ry="1.2" fill="#006464"/>
<rect x="263" y="557" width="129" height="21" rx="2" ry="2" fill="url(#bg)"/>
<rect x="263.5" y="557.5" width="128" height="20" rx="1.5" ry="1.5" fill="none" stroke="#ffffff" stroke-opacity="0.16"/>
<text x="271.70" y="572.1" class="t r" textLength="110.51" lengthAdjust="spacingAndGlyphs">Global Gaussians</text>
<rect x="393" y="556" width="132" height="23" rx="1.2" ry="1.2" fill="#006464"/>
<rect x="394" y="557" width="130" height="21" rx="2" ry="2" fill="url(#bg)"/>
<rect x="394.5" y="557.5" width="129" height="20" rx="1.5" ry="1.5" fill="none" stroke="#ffffff" stroke-opacity="0.16"/>
<text x="413.16" y="572.1" class="t r" textLength="90.34" lengthAdjust="spacingAndGlyphs">Scale Analysis</text>
<rect x="525" y="556" width="132" height="23" rx="1.2" ry="1.2" fill="#006464"/>
<rect x="526" y="557" width="130" height="21" rx="2" ry="2" fill="url(#bg)"/>
<rect x="526.5" y="557.5" width="129" height="20" rx="1.5" ry="1.5" fill="none" stroke="#ffffff" stroke-opacity="0.16"/>
<text x="545.89" y="572.1" class="t r" textLength="89.68" lengthAdjust="spacingAndGlyphs">Trial make I(q)</text>
<rect x="657" y="556" width="132" height="23" rx="1.2" ry="1.2" fill="#006464"/>
<rect x="658" y="557" width="130" height="21" rx="2" ry="2" fill="url(#bg)"/>
<rect x="658.5" y="557.5" width="129" height="20" rx="1.5" ry="1.5" fill="none" stroke="#ffffff" stroke-opacity="0.16"/>
<text x="700.10" y="572.1" class="t r" textLength="44.83" lengthAdjust="spacingAndGlyphs">Guinier</text>
<rect x="0" y="579" width="63" height="1" fill="#007878"/>
<rect x="0" y="601" width="63" height="1" fill="#008b8b"/>
<rect x="-1.5" y="584.5" width="14" height="14" fill="#ffffff" stroke="#9a9a9a" stroke-width="1"/>
<text x="17.75" y="595.2" class="t" textLength="35.70" lengthAdjust="spacingAndGlyphs">Scroll</text>
<text x="63.55" y="595.2" class="t" textLength="72.56" lengthAdjust="spacingAndGlyphs">q^2 range:</text>
<rect x="140" y="580" width="73" height="21" rx="2" ry="2" fill="#ff0000"/>
<rect x="215" y="580" width="73" height="21" rx="2" ry="2" fill="#ff0000"/>
<g clip-path="url(#ci)">
<text x="128.17" y="595.2" class="t" textLength="80.33" lengthAdjust="spacingAndGlyphs">7.59978e-05</text>
</g>
<text x="229.04" y="595.2" class="t" textLength="43.55" lengthAdjust="spacingAndGlyphs">0.0025</text>
<text x="292.24" y="595.2" class="t" textLength="96.12" lengthAdjust="spacingAndGlyphs">plot extension:</text>
<rect x="391.5" y="579.5" width="74" height="22" rx="2" ry="2" fill="#ffffff" stroke="#8e8e8e" stroke-width="1"/>
<rect x="466.5" y="579.5" width="73" height="22" rx="2" ry="2" fill="#ffffff" stroke="#8e8e8e" stroke-width="1"/>
<text x="408.81" y="595.2" class="t" textLength="37.40" lengthAdjust="spacingAndGlyphs">5e-05</text>
<text x="483.41" y="595.2" class="t" textLength="37.50" lengthAdjust="spacingAndGlyphs">5e-05</text>
<rect x="540" y="601" width="174" height="1" fill="#008b8b"/>
<rect x="540" y="579" width="174" height="1" fill="#007878"/>
<rect x="541.5" y="583.5" width="14" height="14" fill="#ffffff" stroke="#9a9a9a" stroke-width="1"/>
<path d="M544.3 590.3 L548.2 595.2 L553 586.2" fill="none" stroke="#000" stroke-width="1.8" stroke-linecap="butt" stroke-linejoin="miter"/>
<text x="561.39" y="595.2" class="t" textLength="18.65" lengthAdjust="spacingAndGlyphs">SD</text>
<rect x="590.5" y="583.5" width="14" height="14" fill="#ffffff" stroke="#9a9a9a" stroke-width="1"/>
<path d="M593.3 590.3 L597.2 595.2 L602 586.2" fill="none" stroke="#000" stroke-width="1.8" stroke-linecap="butt" stroke-linejoin="miter"/>
<text x="609.98" y="595.2" class="t" textLength="94.86" lengthAdjust="spacingAndGlyphs">qmax*Rg limit:</text>
<rect x="714.5" y="579.5" width="74" height="22" rx="2" ry="2" fill="#ffffff" stroke="#8e8e8e" stroke-width="1"/>
<text x="741.21" y="595.2" class="t" textLength="19.81" lengthAdjust="spacingAndGlyphs">1.3</text>
<text x="214.88" y="615.6" textLength="77.77" lengthAdjust="spacingAndGlyphs" style="font-size:14.8px;letter-spacing:0.9px;fill:#000;stroke:#000;stroke-width:0.4px">qmax*Rg</text>
<text x="296.25" y="615.6" textLength="66.38" lengthAdjust="spacingAndGlyphs" style="font-size:14.8px;letter-spacing:0.9px;fill:#000;stroke:#000;stroke-width:0.4px">1.29952</text>
<text x="375.80" y="615.6" textLength="23.83" lengthAdjust="spacingAndGlyphs" style="font-size:14.8px;letter-spacing:0.9px;fill:#000;stroke:#000;stroke-width:0.4px">Rg</text>
<text x="402.96" y="615.6" textLength="67.65" lengthAdjust="spacingAndGlyphs" style="font-size:14.8px;letter-spacing:0.9px;fill:#000;stroke:#000;stroke-width:0.4px">28.1764</text>
<text x="483.86" y="615.6" textLength="15.90" lengthAdjust="spacingAndGlyphs" style="font-size:14.8px;letter-spacing:0.9px;fill:#000;stroke:#000;stroke-width:0.4px">I0</text>
<text x="505.37" y="615.6" textLength="65.40" lengthAdjust="spacingAndGlyphs" style="font-size:14.8px;letter-spacing:0.9px;fill:#000;stroke:#000;stroke-width:0.4px">76066.1</text>
<text x="313.35" y="632.4" textLength="66.02" lengthAdjust="spacingAndGlyphs" style="font-size:14.8px;letter-spacing:0.9px;fill:#000;stroke:#000;stroke-width:0.4px">MW[RT]</text>
<text x="389.72" y="632.4" textLength="90.82" lengthAdjust="spacingAndGlyphs" style="font-size:14.8px;letter-spacing:0.9px;fill:#000;stroke:#000;stroke-width:0.4px">7.398e+04</text>
<rect x="789" y="0" width="1" height="637" fill="#f4f4f4"/>
</svg></body></html>
